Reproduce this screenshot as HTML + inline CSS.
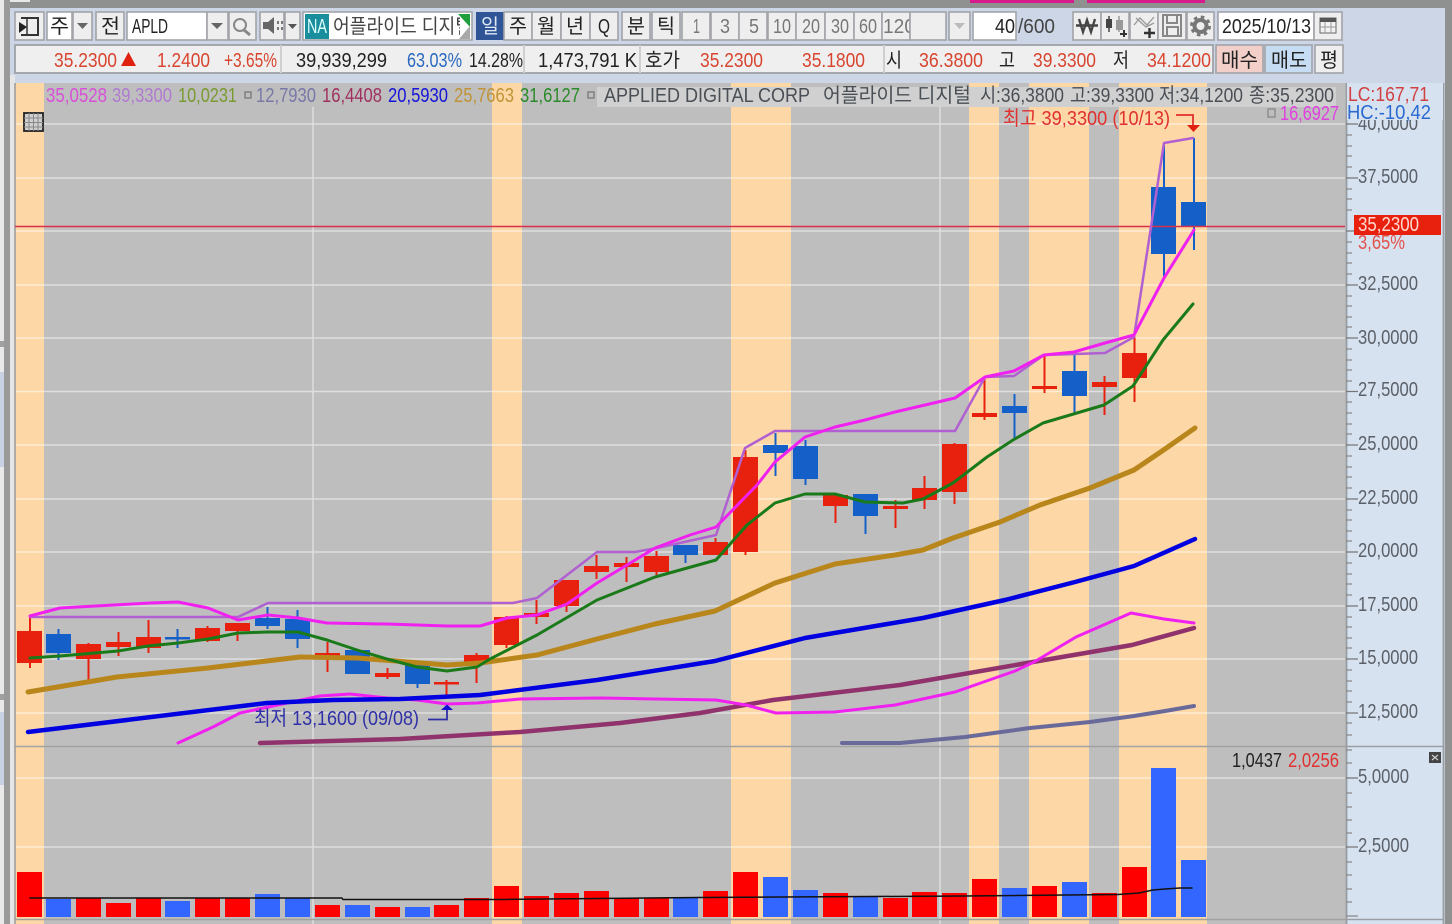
<!DOCTYPE html>
<html lang="ko"><head><meta charset="utf-8"><title>APLD chart</title>
<style>
html,body{margin:0;padding:0;background:#8f9090;width:1452px;height:924px;overflow:hidden}
svg{display:block;position:absolute;left:0;top:0;filter:blur(.35px)}
text{font-family:"Liberation Sans","Noto Sans CJK KR",sans-serif;font-size:20px}
.b{fill:#eeeeee;stroke:#a2a4a8;stroke-width:1.6}
.w{fill:#ffffff;stroke:#a2a4a8;stroke-width:1.6}
.r{fill:#d8452f}.k{fill:#222}.g{fill:#5b6068}.t{fill:#444}
.l{fill:none;stroke-linejoin:round;stroke-linecap:round}
</style></head><body>
<svg width="1452" height="924" viewBox="0 0 1452 924" xmlns="http://www.w3.org/2000/svg">
<defs><clipPath id="nm"><rect x="332" y="12" width="128" height="28"/></clipPath></defs>
<!-- outer window -->
<rect width="1452" height="924" fill="#8f9090"/>
<rect x="0" y="0" width="4" height="924" fill="#e9e9e9"/>
<rect x="0" y="341" width="4" height="6" fill="#a0a0a0"/><rect x="0" y="372" width="4" height="95" fill="#c8d2e2"/>
<rect x="0" y="694" width="4" height="6" fill="#a0a0a0"/><rect x="0" y="712" width="4" height="73" fill="#c8d2e2"/>
<rect x="4" y="0" width="6" height="924" fill="#9a9a9a"/>
<rect x="970" y="0" width="104" height="3" fill="#d81b8c"/><rect x="1087" y="0" width="118" height="3" fill="#d81b8c"/>
<rect x="10" y="0" width="20" height="2" fill="#e8e8e8"/>
<rect x="10" y="8" width="1435" height="916" fill="#ccd6e6"/>
<rect x="10" y="75" width="5" height="849" fill="#e6e6e6"/>
<!-- toolbar row 1 -->
<rect class="b" x="15" y="12" width="29" height="28"/>
<path d="M21 18H38V35H21" fill="none" stroke="#333" stroke-width="2"/><path d="M27 18V35" stroke="#333" stroke-width="1.5"/><path d="M19 22L27 27L19 33Z" fill="#222"/>
<rect class="w" x="47" y="12" width="25" height="28"/><text class="k" x="50" y="33" textLength="19" lengthAdjust="spacingAndGlyphs">주</text>
<rect class="b" x="73" y="12" width="19" height="28"/><path d="M77 23H88L82.500 29Z" fill="#666"/>
<rect class="b" x="96" y="12" width="28" height="28"/><text class="k" x="101" y="33" textLength="19" lengthAdjust="spacingAndGlyphs">전</text>
<rect class="w" x="127" y="12" width="80" height="28"/><text class="k" x="132" y="33" textLength="36" lengthAdjust="spacingAndGlyphs">APLD</text>
<rect class="b" x="207" y="12" width="21" height="28"/><path d="M211 23H223L217 29Z" fill="#666"/>
<rect class="b" x="229" y="12" width="27" height="28"/><circle cx="240" cy="25" r="6" fill="none" stroke="#888" stroke-width="2"/><path d="M244 30L250 35" stroke="#888" stroke-width="3"/>
<rect class="b" x="260" y="12" width="24" height="28"/><path d="M263 22H268L274 17V34L268 29H263Z" fill="#666"/><path d="M277 21h2v3h-2zM281 21h2v3h-2zM277 27h2v3h-2zM281 27h2v3h-2z" fill="#777"/>
<rect class="b" x="285" y="12" width="15" height="28"/><path d="M288 24H297L292.500 29Z" fill="#555"/>
<rect class="w" x="303" y="12" width="169" height="28"/>
<rect x="305" y="14" width="24" height="25" fill="#1a8e9c"/><text x="307" y="33" fill="#dff" textLength="20" lengthAdjust="spacingAndGlyphs">NA</text>
<g clip-path="url(#nm)"><text x="333" y="33" fill="#444" textLength="139" lengthAdjust="spacingAndGlyphs">어플라이드 디지털</text></g>
<path d="M458 14H470V27Z" fill="#1f9e3c"/><path d="M470 26V39H459Z" fill="#a8a8a8"/>
<rect x="476" y="12" width="28" height="28" fill="#2f5597"/><text x="481" y="33" fill="#dfe8f5" textLength="18" lengthAdjust="spacingAndGlyphs">일</text>
<rect class="b" x="504" y="12" width="28" height="28"/><text class="k" x="509" y="33" textLength="18" lengthAdjust="spacingAndGlyphs">주</text>
<rect class="b" x="532" y="12" width="29" height="28"/><text class="k" x="537" y="33" textLength="18" lengthAdjust="spacingAndGlyphs">월</text>
<rect class="b" x="561" y="12" width="29" height="28"/><text class="k" x="566" y="33" textLength="18" lengthAdjust="spacingAndGlyphs">년</text>
<rect class="b" x="590" y="12" width="28" height="28"/><text class="k" x="598" y="33" textLength="12" lengthAdjust="spacingAndGlyphs">Q</text>
<rect class="b" x="622" y="12" width="28" height="28"/><text class="k" x="627" y="33" textLength="18" lengthAdjust="spacingAndGlyphs">분</text>
<rect class="b" x="652" y="12" width="28" height="28"/><text class="k" x="657" y="33" textLength="18" lengthAdjust="spacingAndGlyphs">틱</text>
<g fill="#777">
<rect class="b" x="682" y="12" width="28" height="28"/><text x="693" y="33" textLength="7" lengthAdjust="spacingAndGlyphs">1</text>
<rect class="b" x="711" y="12" width="28" height="28"/><text x="720" y="33" textLength="10" lengthAdjust="spacingAndGlyphs">3</text>
<rect class="b" x="739" y="12" width="28" height="28"/><text x="749" y="33" textLength="10" lengthAdjust="spacingAndGlyphs">5</text>
<rect class="b" x="768" y="12" width="28" height="28"/><text x="773" y="33" textLength="18" lengthAdjust="spacingAndGlyphs">10</text>
<rect class="b" x="796" y="12" width="29" height="28"/><text x="802" y="33" textLength="18" lengthAdjust="spacingAndGlyphs">20</text>
<rect class="b" x="825" y="12" width="29" height="28"/><text x="831" y="33" textLength="18" lengthAdjust="spacingAndGlyphs">30</text>
<rect class="b" x="854" y="12" width="28" height="28"/><text x="859" y="33" textLength="18" lengthAdjust="spacingAndGlyphs">60</text>
<rect class="b" x="882" y="12" width="28" height="28"/><text x="883" y="33" textLength="32" lengthAdjust="spacingAndGlyphs">120</text>
</g>
<rect class="b" x="910" y="12" width="36" height="28"/>
<rect class="b" x="949" y="12" width="21" height="28"/><path d="M954 23H965L959.500 29Z" fill="#bbb"/>
<rect class="w" x="973" y="12" width="43" height="28"/><text class="k" x="995" y="33" textLength="20" lengthAdjust="spacingAndGlyphs">40</text>
<text class="t" x="1018" y="33" textLength="37" lengthAdjust="spacingAndGlyphs">/600</text>
<rect class="b" x="1073" y="12" width="28" height="28"/><path d="M1079 19L1083 32L1087 20L1091 32L1095 19" fill="none" stroke="#444" stroke-width="2.300"/><path d="M1076 25.500H1098" stroke="#444" stroke-width="2.600"/>
<rect class="b" x="1101" y="12" width="28" height="28"/><path d="M1109 16V32" stroke="#444" stroke-width="1.500"/><rect x="1106" y="19" width="6" height="9" fill="#444"/><path d="M1119 16V32" stroke="#999" stroke-width="1.500"/><rect x="1116" y="20" width="7" height="10" fill="#999"/><path d="M1120 34H1127M1124 30V37" stroke="#333" stroke-width="2"/>
<rect class="b" x="1130" y="12" width="28" height="28"/><path d="M1134 25L1140 18L1147 25L1154 17M1136 18L1146 27L1154 23" fill="none" stroke="#999" stroke-width="1.300"/><path d="M1144 33H1155M1149.500 28V38" stroke="#333" stroke-width="2.400"/>
<rect class="b" x="1158" y="12" width="28" height="28"/><path d="M1163 15H1181V36H1163ZM1167 15V23H1177V15M1167 36V27H1178V36" fill="none" stroke="#888" stroke-width="2"/>
<rect class="b" x="1187" y="12" width="27" height="28"/><circle cx="1200.500" cy="26" r="6" fill="none" stroke="#777" stroke-width="4"/><circle cx="1200.500" cy="26" r="9" fill="none" stroke="#777" stroke-width="3" stroke-dasharray="3.500 3.570"/>
<rect class="w" x="1218" y="12" width="96" height="28"/><text class="k" x="1222" y="33" textLength="89" lengthAdjust="spacingAndGlyphs">2025/10/13</text>
<rect class="b" x="1314" y="12" width="28" height="28"/><rect x="1320" y="18" width="16" height="15" fill="#f2f2f2" stroke="#666"/><rect x="1320" y="18" width="16" height="4" fill="#555"/><path d="M1320 27H1336M1325 22V33M1331 22V33" stroke="#999" stroke-width="1"/>
<!-- row 2 -->
<rect x="15" y="45" width="1198" height="28" fill="#efefef" stroke="#9fa2a6" stroke-width="1.800"/>
<path d="M281 45V73M524 45V73M640 45V73M884 45V73" stroke="#cfcfcf" stroke-width="2"/>
<text class="r" x="54" y="67" textLength="63" lengthAdjust="spacingAndGlyphs">35.2300</text><path d="M121 66L128.500 52L136 66Z" fill="#e0210f"/>
<text class="r" x="157" y="67" textLength="53" lengthAdjust="spacingAndGlyphs">1.2400</text>
<text class="r" x="224" y="67" textLength="53" lengthAdjust="spacingAndGlyphs">+3.65%</text>
<text class="k" x="296" y="67" textLength="91" lengthAdjust="spacingAndGlyphs">39,939,299</text>
<text fill="#2a68c0" x="407" y="67" textLength="55" lengthAdjust="spacingAndGlyphs">63.03%</text>
<text class="k" x="469" y="67" textLength="54" lengthAdjust="spacingAndGlyphs">14.28%</text>
<text class="k" x="538" y="67" textLength="99" lengthAdjust="spacingAndGlyphs">1,473,791 K</text>
<text class="k" x="645" y="67" textLength="35" lengthAdjust="spacingAndGlyphs">호가</text>
<text class="r" x="700" y="67" textLength="63" lengthAdjust="spacingAndGlyphs">35.2300</text>
<text class="r" x="802" y="67" textLength="63" lengthAdjust="spacingAndGlyphs">35.1800</text>
<text class="k" x="886" y="67" textLength="16" lengthAdjust="spacingAndGlyphs">시</text>
<text class="r" x="919" y="67" textLength="64" lengthAdjust="spacingAndGlyphs">36.3800</text>
<text class="k" x="999" y="67" textLength="16" lengthAdjust="spacingAndGlyphs">고</text>
<text class="r" x="1033" y="67" textLength="63" lengthAdjust="spacingAndGlyphs">39.3300</text>
<text class="k" x="1113" y="67" textLength="16" lengthAdjust="spacingAndGlyphs">저</text>
<text class="r" x="1147" y="67" textLength="64" lengthAdjust="spacingAndGlyphs">34.1200</text>
<rect x="1216" y="45" width="47" height="28" fill="#f2cfc9" stroke="#a2a4a8" stroke-width="1.600"/><text class="k" x="1221" y="67" textLength="37" lengthAdjust="spacingAndGlyphs">매수</text>
<rect x="1265" y="45" width="47" height="28" fill="#c5dcf2" stroke="#a2a4a8" stroke-width="1.600"/><text class="k" x="1271" y="67" textLength="36" lengthAdjust="spacingAndGlyphs">매도</text>
<rect class="b" x="1315" y="45" width="28" height="28"/><text class="k" x="1320" y="67" textLength="18" lengthAdjust="spacingAndGlyphs">평</text>
<!-- chart -->
<rect x="15" y="83" width="1331" height="841" fill="#bebebe"/>
<g fill="#fdd7a6">
<rect x="15" y="83" width="29" height="841"/><rect x="492" y="83" width="30" height="841"/><rect x="731" y="83" width="60" height="841"/><rect x="969" y="83" width="30" height="841"/><rect x="1029" y="83" width="60" height="841"/><rect x="1119" y="83" width="88" height="841"/>
</g>
<rect x="597" y="87" width="739" height="20" fill="#d0d0d0"/>
<path d="M15 124H1345M15 178H1345M15 231H1345M15 285H1345M15 338H1345M15 391.500H1345M15 445H1345M15 499H1345M15 552H1345M15 606H1345M15 659H1345M15 713H1345M15 778H1345M15 847H1345M313 107V924M940 107V924" stroke="#fff" stroke-opacity=".5" stroke-width="1.500"/>
<path d="M15 746.500H1443M15 919.500H1443" stroke="#a2a2a2" stroke-width="1.500"/>
<path d="M15 83V924" stroke="#999" stroke-width="1.500"/>
<!-- volume -->
<g fill="#ff0000">
<rect x="17" y="872" width="25" height="45"/><rect x="76" y="898" width="25" height="19"/><rect x="106" y="903" width="25" height="14"/><rect x="136" y="898" width="25" height="19"/><rect x="195" y="898" width="25" height="19"/><rect x="225" y="898" width="25" height="19"/><rect x="315" y="905" width="25" height="12"/><rect x="375" y="907" width="25" height="10"/><rect x="434" y="905" width="25" height="12"/><rect x="464" y="898" width="25" height="19"/><rect x="494" y="886" width="25" height="31"/><rect x="524" y="896" width="25" height="21"/><rect x="554" y="893" width="25" height="24"/><rect x="584" y="891" width="25" height="26"/><rect x="614" y="898" width="25" height="19"/><rect x="644" y="898" width="25" height="19"/><rect x="703" y="891" width="25" height="26"/><rect x="733" y="872" width="25" height="45"/><rect x="823" y="893" width="25" height="24"/><rect x="883" y="898" width="25" height="19"/><rect x="912" y="892" width="25" height="25"/><rect x="942" y="893" width="25" height="24"/><rect x="972" y="879" width="25" height="38"/><rect x="1032" y="886" width="25" height="31"/><rect x="1092" y="893" width="25" height="24"/><rect x="1122" y="867" width="25" height="50"/>
</g>
<g fill="#3366ff">
<rect x="46" y="899" width="25" height="18"/><rect x="165" y="901" width="25" height="16"/><rect x="255" y="894" width="25" height="23"/><rect x="285" y="898" width="25" height="19"/><rect x="345" y="905" width="25" height="12"/><rect x="405" y="907" width="25" height="10"/><rect x="673" y="898" width="25" height="19"/><rect x="763" y="877" width="25" height="40"/><rect x="793" y="890" width="25" height="27"/><rect x="853" y="897" width="25" height="20"/><rect x="1002" y="888" width="25" height="29"/><rect x="1062" y="882" width="25" height="35"/><rect x="1151" y="768" width="25" height="149"/><rect x="1181" y="860" width="25" height="57"/>
</g>
<path class="l" d="M30 898H342L343 899.500H500L700 897.500L965 896L1118 894.500L1139 893L1153 890L1165 889L1180 888H1192" stroke="#111" stroke-width="1.500"/>
<!-- red candle wicks + bodies -->
<g fill="#e8200e">
<rect x="29" y="617" width="2" height="51"/><rect x="17" y="631" width="25" height="32"/>
<rect x="87.500" y="643" width="2" height="39"/><rect x="76" y="644" width="25" height="15"/>
<rect x="117.500" y="632" width="2" height="24"/><rect x="106" y="642" width="25" height="5"/>
<rect x="147.500" y="620" width="2" height="33"/><rect x="136" y="637" width="25" height="11"/>
<rect x="206.500" y="626" width="2" height="16"/><rect x="195" y="628" width="25" height="13"/>
<rect x="236.500" y="623" width="2" height="18"/><rect x="225" y="623" width="25" height="8"/>
<rect x="326.500" y="642" width="2" height="30"/><rect x="315" y="653" width="25" height="3"/>
<rect x="386.500" y="668" width="2" height="11"/><rect x="375" y="673" width="25" height="4"/>
<rect x="445.500" y="680" width="2" height="15"/><rect x="434" y="682" width="25" height="2.500"/>
<rect x="475.500" y="653" width="2" height="30"/><rect x="464" y="655" width="25" height="7"/>
<rect x="505.500" y="616" width="2" height="32"/><rect x="494" y="617" width="25" height="28"/>
<rect x="535.500" y="600" width="2" height="24"/><rect x="524" y="613" width="25" height="4"/>
<rect x="565.500" y="580" width="2" height="32"/><rect x="554" y="580" width="25" height="26"/>
<rect x="595.500" y="555" width="2" height="24"/><rect x="584" y="566" width="25" height="6"/>
<rect x="625.500" y="557" width="2" height="25"/><rect x="614" y="563" width="25" height="4"/>
<rect x="655.500" y="551" width="2" height="24"/><rect x="644" y="556" width="25" height="16"/>
<rect x="714.500" y="538" width="2" height="17"/><rect x="703" y="542" width="25" height="13"/>
<rect x="744.500" y="450" width="2" height="105"/><rect x="733" y="457" width="25" height="95"/>
<rect x="834.500" y="495" width="2" height="28"/><rect x="823" y="495" width="25" height="11"/>
<rect x="894.500" y="500" width="2" height="28"/><rect x="883" y="506" width="25" height="3"/>
<rect x="923.500" y="476" width="2" height="33"/><rect x="912" y="488" width="25" height="12"/>
<rect x="953.500" y="443" width="2" height="61"/><rect x="942" y="444" width="25" height="48"/>
<rect x="983.500" y="378" width="2" height="42"/><rect x="972" y="413" width="25" height="4"/>
<rect x="1043.500" y="355" width="2" height="38"/><rect x="1032" y="386" width="25" height="3"/>
<rect x="1103.500" y="376" width="2" height="39"/><rect x="1092" y="382" width="25" height="5"/>
<rect x="1133.500" y="337" width="2" height="65"/><rect x="1122" y="353" width="25" height="25"/>
</g>
<!-- blue candles -->
<g fill="#1560c8">
<rect x="57.500" y="629" width="2" height="31"/><rect x="46" y="634" width="25" height="19"/>
<rect x="176.500" y="629" width="2" height="19"/><rect x="165" y="637" width="25" height="2.500"/>
<rect x="266.500" y="607" width="2" height="22"/><rect x="255" y="618" width="25" height="8"/>
<rect x="296.500" y="610" width="2" height="38"/><rect x="285" y="619" width="25" height="20"/>
<rect x="345" y="650" width="25" height="24"/>
<rect x="416.500" y="665" width="2" height="23"/><rect x="405" y="665" width="25" height="19"/>
<rect x="684.500" y="545" width="2" height="18"/><rect x="673" y="545" width="25" height="10"/>
<rect x="774.500" y="433" width="2" height="43"/><rect x="763" y="445" width="25" height="8"/>
<rect x="804.500" y="440" width="2" height="45"/><rect x="793" y="446" width="25" height="33"/>
<rect x="864.500" y="494" width="2" height="40"/><rect x="853" y="494" width="25" height="22"/>
<rect x="1013.500" y="394" width="2" height="46"/><rect x="1002" y="406" width="25" height="7"/>
<rect x="1073.500" y="355" width="2" height="58"/><rect x="1062" y="371" width="25" height="25"/>
<rect x="1163" y="143" width="2" height="135"/><rect x="1151" y="187" width="25" height="67"/>
<rect x="1193" y="138" width="2" height="112"/><rect x="1181" y="202" width="25" height="24"/>
</g>
<!-- current price line -->
<path d="M15 226.500H1345" stroke="#d9304a" stroke-width="1.600"/>
<!-- moving averages -->
<polyline class="l" stroke="#6a6a9a" stroke-width="4" points="842,743 900,743 965,737 1030,728 1090,722 1134,716 1165,711 1194,706"/>
<polyline class="l" stroke="#90336c" stroke-width="4.500" points="260,743 400,739 520,732 620,723 700,713 773,700 900,685 1027,663 1132,645 1194,628"/>
<polyline class="l" stroke="#f020f0" stroke-width="3" points="178,743 213,727 240,713 287,703 320,696 350,694 387,698 417,700 447,704 477,703 520,699 600,698 716,700 746,705 776,713 835,712 895,705 955,692 1015,671 1034,662 1076,637 1131,613 1164,619 1194,623"/>
<polyline class="l" stroke="#0000e0" stroke-width="4.500" points="28,732 267,703 333,700 400,699 480,695 597,680 715,661 805,638 923,618 1005,600 1075,582 1134,566 1195,539"/>
<polyline class="l" stroke="#b8861b" stroke-width="5" points="28,692 117,677 208,668 300,657 357,658 447,665 480,663 537,655 597,639 655,624 715,611 775,583 835,564 895,555 923,550 953,538 1000,522 1040,505 1090,488 1134,470 1165,449 1195,428"/>
<polyline class="l" stroke="#1a7a1a" stroke-width="3" points="30,658 60,656 118,651 148,646 178,643 208,639 238,633 268,632 298,632 327,640 357,650 387,659 417,667 447,671 477,667 490,659 537,635 597,600 655,577 716,560 747,525 775,503 805,494 835,494 865,502 903,503 923,499 953,483 987,457 1013,440 1043,423 1104,405 1133,386 1163,340 1193,304"/>
<polyline class="l" stroke="#b060d0" stroke-width="2.500" points="30,617 238,617 268,603 513,603 537,598 597,552 635,552 657,548 716,535 745,448 775,431 955,431 985,377 1014,376 1044,355 1105,353 1134,337 1164,143 1193,138"/>
<polyline class="l" stroke="#f020f0" stroke-width="3" points="30,616 60,608 150,603 178,602 208,608 238,620 268,615 298,618 327,623 387,624 447,626 480,626 507,618 537,615 567,604 597,583 627,565 655,548 690,535 716,527 757,485 775,462 805,437 835,427 865,420 895,412 955,398 985,377 1014,371 1044,355 1074,352 1105,343 1134,335 1164,278 1194,230"/>
<!-- header text -->
<text fill="#d84fd8" x="46" y="102" textLength="61" lengthAdjust="spacingAndGlyphs">35,0528</text>
<text fill="#b07ad0" x="112" y="102" textLength="60" lengthAdjust="spacingAndGlyphs">39,3300</text>
<text fill="#7a9a30" x="178" y="102" textLength="59" lengthAdjust="spacingAndGlyphs">10,0231</text>
<rect x="245" y="92" width="6" height="6" fill="none" stroke="#777" stroke-width="1.300"/>
<text fill="#7878a8" x="256" y="102" textLength="60" lengthAdjust="spacingAndGlyphs">12,7930</text>
<text fill="#a03060" x="322" y="102" textLength="60" lengthAdjust="spacingAndGlyphs">16,4408</text>
<text fill="#1414d8" x="388" y="102" textLength="60" lengthAdjust="spacingAndGlyphs">20,5930</text>
<text fill="#c09436" x="454" y="102" textLength="60" lengthAdjust="spacingAndGlyphs">25,7663</text>
<text fill="#2a8a2a" x="520" y="102" textLength="60" lengthAdjust="spacingAndGlyphs">31,6127</text>
<rect x="588" y="92" width="6" height="6" fill="none" stroke="#777" stroke-width="1.300"/>
<text fill="#4a4f55" x="604" y="102" textLength="206" lengthAdjust="spacingAndGlyphs">APPLIED DIGITAL CORP</text>
<text fill="#4a4f55" x="823" y="102" textLength="148" lengthAdjust="spacingAndGlyphs">어플라이드 디지털</text>
<text fill="#4a4f55" x="980" y="102" textLength="84" lengthAdjust="spacingAndGlyphs">시:36,3800</text>
<text fill="#4a4f55" x="1070" y="102" textLength="84" lengthAdjust="spacingAndGlyphs">고:39,3300</text>
<text fill="#4a4f55" x="1159" y="102" textLength="84" lengthAdjust="spacingAndGlyphs">저:34,1200</text>
<text fill="#4a4f55" x="1249" y="102" textLength="85" lengthAdjust="spacingAndGlyphs">종:35,2300</text>
<rect x="1268" y="109" width="7" height="8" fill="none" stroke="#888" stroke-width="1.300"/>
<text fill="#e040e0" x="1280" y="120" textLength="59" lengthAdjust="spacingAndGlyphs">16,6927</text>
<text fill="#e03030" x="1003" y="125" textLength="167" lengthAdjust="spacingAndGlyphs">최고 39,3300 (10/13)</text>
<path d="M1176 115H1193V125" fill="none" stroke="#e03030" stroke-width="1.800"/><path d="M1187 125H1200L1193.500 132Z" fill="#e0210f"/>
<text fill="#2f2fa8" x="254" y="725" textLength="165" lengthAdjust="spacingAndGlyphs">최저 13,1600 (09/08)</text>
<path d="M428 719.500H447V708" fill="none" stroke="#2f2fa8" stroke-width="1.800"/><path d="M441 710L447 704.500L453 710Z" fill="#1010d0"/>
<text class="k" x="1232" y="767" textLength="50" lengthAdjust="spacingAndGlyphs">1,0437</text>
<text fill="#e03030" x="1288" y="767" textLength="51" lengthAdjust="spacingAndGlyphs">2,0256</text>
<rect x="24" y="113" width="19" height="18" fill="#cfcfcf" stroke="#222" stroke-width="1.800"/><path d="M24 118H43M24 122.500H43M24 127H43M29 113V131M33.500 113V131M38 113V131" stroke="#888" stroke-width="1"/>
<!-- right axis -->
<rect x="1346" y="83" width="97" height="841" fill="#d7e2f1"/>
<path d="M1346.500 83V924" stroke="#999da2" stroke-width="1.800"/>
<path d="M1443.500 83V924" stroke="#9a9da2" stroke-width="1.800"/>
<path d="M1346 124H1358M1346 178H1358M1346 231H1358M1346 285H1358M1346 338H1358M1346 391.500H1358M1346 445H1358M1346 499H1358M1346 552H1358M1346 606H1358M1346 659H1358M1346 713H1358M1346 778H1358M1346 847H1358" stroke="#777" stroke-width="1.300"/>
<path d="M1346 135H1352M1346 146H1352M1346 156H1352M1346 167H1352M1346 189H1352M1346 199H1352M1346 210H1352M1346 242H1352M1346 253H1352M1346 263H1352M1346 274H1352M1346 296H1352M1346 306H1352M1346 317H1352M1346 327H1352M1346 349H1352M1346 360H1352M1346 370H1352M1346 381H1352M1346 402H1352M1346 413H1352M1346 424H1352M1346 434H1352M1346 456H1352M1346 467H1352M1346 477H1352M1346 488H1352M1346 510H1352M1346 520H1352M1346 531H1352M1346 541H1352M1346 563H1352M1346 574H1352M1346 584H1352M1346 595H1352M1346 617H1352M1346 627H1352M1346 638H1352M1346 648H1352M1346 670H1352M1346 681H1352M1346 691H1352M1346 702H1352M1346 723H1352M1346 735H1352M1346 750H1352M1346 763H1352M1346 793H1352M1346 807H1352M1346 820H1352M1346 833H1352M1346 862H1352M1346 875H1352M1346 889H1352M1346 902H1352M1346 916H1358" stroke="#888" stroke-width="1.200"/>
<g class="g">
<text x="1358" y="130" textLength="60" lengthAdjust="spacingAndGlyphs">40,0000</text>
<rect x="1347" y="83" width="96" height="37" fill="#d7e2f1"/>
<text x="1358" y="183" textLength="60" lengthAdjust="spacingAndGlyphs">37,5000</text>
<text x="1358" y="290" textLength="60" lengthAdjust="spacingAndGlyphs">32,5000</text>
<text x="1358" y="344" textLength="60" lengthAdjust="spacingAndGlyphs">30,0000</text>
<text x="1358" y="396" textLength="60" lengthAdjust="spacingAndGlyphs">27,5000</text>
<text x="1358" y="450" textLength="60" lengthAdjust="spacingAndGlyphs">25,0000</text>
<text x="1358" y="504" textLength="60" lengthAdjust="spacingAndGlyphs">22,5000</text>
<text x="1358" y="557" textLength="60" lengthAdjust="spacingAndGlyphs">20,0000</text>
<text x="1358" y="611" textLength="60" lengthAdjust="spacingAndGlyphs">17,5000</text>
<text x="1358" y="664" textLength="60" lengthAdjust="spacingAndGlyphs">15,0000</text>
<text x="1358" y="718" textLength="60" lengthAdjust="spacingAndGlyphs">12,5000</text>
<text x="1358" y="783" textLength="51" lengthAdjust="spacingAndGlyphs">5,0000</text>
<text x="1358" y="852" textLength="51" lengthAdjust="spacingAndGlyphs">2,5000</text>
</g>
<rect x="1354" y="215" width="87" height="20" fill="#e8200e"/>
<text fill="#ffd9d0" x="1358" y="231" textLength="61" lengthAdjust="spacingAndGlyphs">35,2300</text>
<text fill="#e2504a" x="1358" y="249" textLength="47" lengthAdjust="spacingAndGlyphs">3,65%</text>
<text fill="#d04040" x="1348" y="101" textLength="81" lengthAdjust="spacingAndGlyphs">LC:167,71</text>
<text fill="#2a6ad0" x="1347" y="119" textLength="84" lengthAdjust="spacingAndGlyphs">HC:-10,42</text>
<rect x="1429" y="752" width="12" height="11" fill="#444"/><path d="M1432 755L1438 760M1438 755L1432 760" stroke="#ccc" stroke-width="1.200"/>
<path d="M1346 746.500H1443M1346 919.500H1443" stroke="#9a9da2" stroke-width="1.500"/>
</svg>
</body></html>
